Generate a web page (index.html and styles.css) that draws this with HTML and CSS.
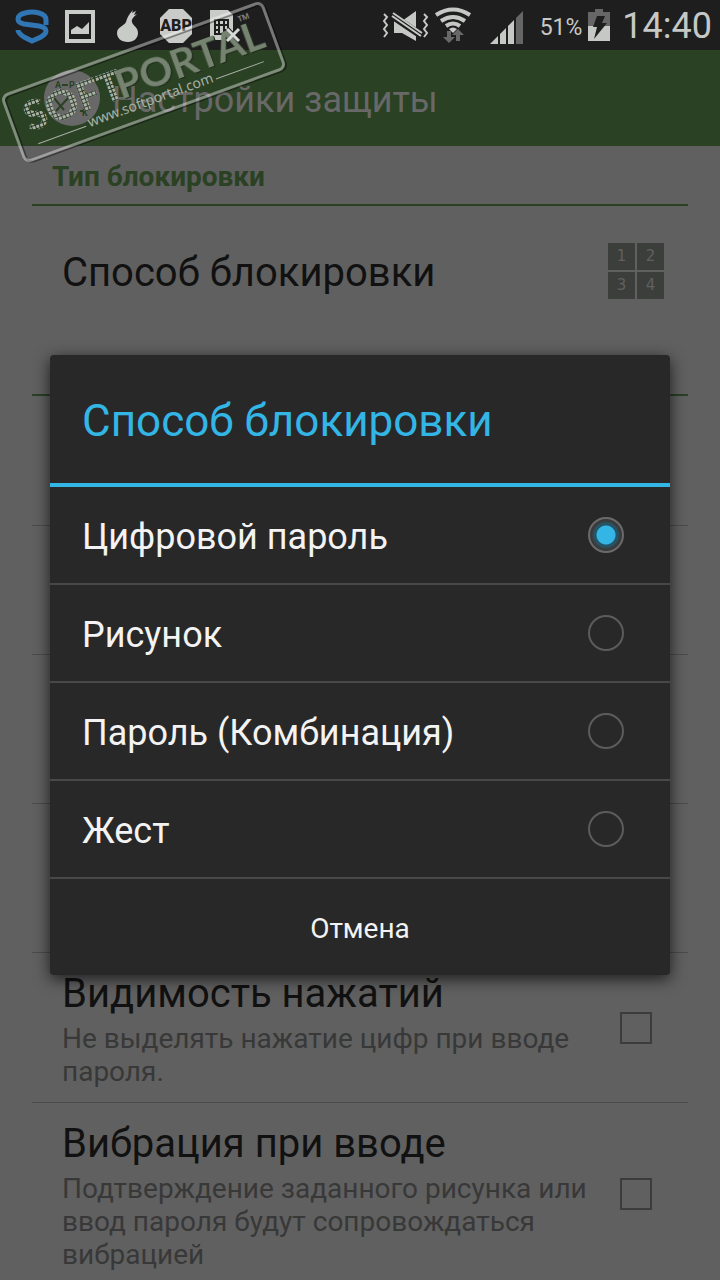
FILE: index.html
```html
<!DOCTYPE html>
<html lang="ru">

<head>
    <meta charset="utf-8">
    <meta name="viewport" content="width=device-width, initial-scale=1">
    <title>Настройки защиты</title>
    <link rel="stylesheet" href="styles.css">
</head>

<body>
    <div class="screen">
        <div class="statusbar">
            <div class="notifications">
                <svg width="48" height="50" viewBox="0 0 48 50">
                    <path d="M38 25v-5c0-4-3-6-7-7q-7-2-14 0c-4 1-7 3-7 6s2 4 6 5l15 2c5 1 7 3 7 5 0 3-2 4-5 6l-9 4-8-4c-3-2-6-4-6-7" fill="none" stroke="#3076b5" stroke-width="5"/>
                </svg>
                <svg width="48" height="50" viewBox="0 0 48 50">
                    <path d="M9 10h30v33H9zM13 14v25h22V14zM15 34v-4l6-4 5 3 7-7v12z" fill="#c9cbc9" fill-rule="evenodd"/>
                </svg>
                <svg width="48" height="50" viewBox="0 0 48 50">
                    <path d="M24 42c-7 0-11-4-11-9 0-6 7-7 9-11 1-4 3-8 7-12l-1 3 4-2-2 4 3-1c-3 3-6 5-5 8 1 4 6 5 6 11 0 5-4 9-10 9z" fill="#c9cbc9"/>
                </svg>
                <svg width="48" height="50" viewBox="0 0 48 50">
                    <path d="M17 9h14l9 9v16l-9 9H17l-9-9V18z" fill="#c9cbc9"/>
                    <text x="24" y="31" class="abp">ABP</text>
                </svg>
                <svg width="48" height="50" viewBox="0 0 48 50">
                    <path d="M10 10h18l5 5v25H10z" fill="#c9cbc9"/>
                    <path d="M14 19h15v16H14z" fill="#1e1e1e"/>
                    <path d="M16 21h2v3h-2zM20 21h3v3h-3zM25 21h2v3h-2zM16 26h2v3h-2zM20 26h3v7h-3zM25 26h2v3h-2zM16 31h2v2h-2z" fill="#c9cbc9"/>
                    <path d="M27 29l12 12M39 29L27 41" stroke="#1e1e1e" stroke-width="5"/>
                </svg>
            </div>
            <div class="system">
                <svg width="48" height="50" viewBox="0 0 48 50">
                    <path d="M2 14l3 3-3 4 3 4-3 4 3 4-3 4M42 14l3 3-3 4 3 4-3 4 3 4-3 4" fill="none" stroke="#c6c8c6" stroke-width="2"/>
                    <path d="M12 21h8l14-10v30L20 33h-8z" fill="#c6c8c6"/>
                    <path d="M9 15l31 21" stroke="#1e1e1e" stroke-width="7"/>
                    <path d="M11 13l29 20M10 16l29 20" stroke="#c6c8c6" stroke-width="2"/>
                </svg>
                <svg class="wifi" width="38" height="50" viewBox="0 0 38 50">
                    <g fill="none" stroke="#c6c8c6" stroke-width="4">
                        <path d="M2 15q17-11 34 0M7 21q12-8 24 0M12 26q7-5 14 0"/>
                    </g>
                    <path d="M15 29q4-3 8 0l-4 4z" fill="#c6c8c6"/>
                    <path d="M13 31h4v6h4l-6 6-6-6h4zM22 41v-6h-4l6-6 6 6h-4v6z" fill="#686868"/>
                </svg>
                <svg class="signal" width="34" height="50" viewBox="0 0 34 50">
                    <path d="M0 44l8-8v8zM10 34l6-6v16h-6zM18 26l6-6v24h-6z" fill="#c6c8c6"/>
                    <path d="M26 18l7-7v33h-7z" fill="#666"/>
                </svg>
                <span class="percent">51%</span>
                <svg class="battery" width="22" height="50" viewBox="0 0 22 50">
                    <path d="M0 12h7V9h8v3h7v15H0z" fill="#666"/>
                    <path d="M0 26h22v15H0z" fill="#c6c8c6"/>
                    <path d="M9 16h8l-3 7h5L6 39l3-12H5z" fill="#1e1e1e"/>
                </svg>
                <span class="clock">14:40</span>
            </div>
        </div>

        <header class="header">
            <svg width="56" height="56" viewBox="0 0 56 56">
                <circle cx="28" cy="28" r="28" fill="#686868"/>
                <path d="M18 15h6M36 18l8 8M26 26l-14 15M10 28l10 12M36 41l4 0" fill="none" stroke="#2a4123" stroke-width="2"/>
                <text x="11" y="18" class="logo-letter">A</text>
                <text x="25" y="18" class="logo-letter">P</text>
                <text x="38" y="46" class="logo-letter">K</text>
            </svg>
            <h1>Настройки защиты</h1>
        </header>

        <main>
            <h2 class="section">Тип блокировки</h2>
            <div class="row last">
                <div class="text">
                    <div class="name">Способ блокировки</div>
                </div>
                <div class="keys"><span>1</span><span>2</span><span>3</span><span>4</span></div>
            </div>
            <!-- rows covered by the dialog -->
            <div class="section"></div>
            <div class="row first"></div>
            <div class="row"></div>
            <div class="row tall"></div>
            <div class="row tall"></div>
            <label class="row tall">
                <span class="text">
                    <span class="name">Видимость нажатий</span>
                    <span class="note">Не выделять нажатие цифр при вводе пароля.</span>
                </span>
                <input type="checkbox">
            </label>
            <label class="row tall">
                <span class="text">
                    <span class="name">Вибрация при вводе</span>
                    <span class="note">Подтверждение заданного рисунка или ввод пароля будут сопровождаться вибрацией</span>
                </span>
                <input type="checkbox">
            </label>
        </main>

        <div class="overlay">
            <form class="dialog" role="dialog" aria-labelledby="dialog-title">
                <h2 id="dialog-title">Способ блокировки</h2>
                <label class="option"><span>Цифровой пароль</span><input type="radio" name="lock" checked></label>
                <label class="option"><span>Рисунок</span><input type="radio" name="lock"></label>
                <label class="option"><span>Пароль (Комбинация)</span><input type="radio" name="lock"></label>
                <label class="option"><span>Жест</span><input type="radio" name="lock"></label>
                <button type="button">Отмена</button>
            </form>
        </div>

        <svg class="stamp" width="290" height="166" viewBox="0 0 290 166">
            <defs>
                <pattern id="dots" width="4" height="4" patternUnits="userSpaceOnUse">
                    <rect width="4" height="4" fill="#1c2a18" fill-opacity=".6"/>
                    <rect width="3" height="3" fill="#a9b3a5"/>
                </pattern>
            </defs>
            <g transform="translate(143.5 82) rotate(-20)">
                <rect x="-136" y="-33" width="276" height="70" rx="6" fill="none" stroke="#000" stroke-opacity=".4" stroke-width="2"/>
                <rect x="-138" y="-35" width="276" height="70" rx="6" fill="none" stroke="#fff" stroke-opacity=".4" stroke-width="3"/>
                <text x="-124" y="8" class="soft">SOFT</text>
                <text x="-27" y="9" class="portal">PORTAL</text>
                <text x="110" y="-18" class="tm">™</text>
                <text x="-66" y="24" class="url">www.softportal.com</text>
                <path d="M-120 22h51M69 22h51" stroke="#a8aea6" stroke-width="1"/>
            </g>
            <path d="M227 29l12 12M239 29l-12 12" stroke="#d8d8d8" stroke-width="3"/>
        </svg>
    </div>
</body>

</html>
```

FILE: styles.css
```css
* {
    box-sizing: border-box;
}

body {
    margin: 0;
    background-color: #606060;
    font-family: Roboto, "Noto Sans", sans-serif;
    color: #111;
}

h1, h2 {
    margin: 0;
    font-weight: normal;
}

.screen {
    position: relative;
    height: 100vh;
    overflow: hidden;
}

/* status bar */
.statusbar {
    display: flex;
    justify-content: space-between;
    height: 50px;
    padding: 0 8px;
    background-color: #1e1e1e;
    color: #c6c8c6;
}

.notifications, .system {
    display: flex;
    align-items: center;
}

.abp {
    font: 900 16px Roboto, sans-serif;
    text-anchor: middle;
    fill: #1e1e1e;
}

.wifi {
    margin-left: 4px;
}

.signal {
    margin-left: 18px;
}

.percent {
    margin: 4px 6px 0 16px;
    font-size: 23px;
}

.clock {
    margin: 2px 0 0 12px;
    font-size: 36px;
}

/* title */
.header {
    display: flex;
    align-items: center;
    gap: 12px;
    height: 96px;
    padding: 0 44px;
    background-color: #2a4123;
    color: #686868;
}

.header h1 {
    padding-top: 4px;
    font-size: 36px;
}

.logo-letter {
    font: bold 9px Roboto, sans-serif;
    fill: #2a4123;
}

/* settings list */
main {
    padding: 0 32px;
}

.section {
    height: 60px;
    padding: 2px 20px 0;
    border-bottom: 2px solid #2a4123;
    color: #2a4123;
    font-size: 28px;
    font-weight: bold;
    line-height: 58px;
}

.row {
    display: flex;
    align-items: center;
    justify-content: space-between;
    min-height: 129px;
    padding: 14px 24px 14px 30px;
    border-bottom: 1px solid #4b4b4b;
}

.row.first {
    min-height: 130px;
}

.row.tall {
    min-height: 149px;
}

.row.last {
    min-height: 130px;
    border-bottom: 0;
}

.text {
    flex: 1;
}

.name {
    display: block;
    padding-top: 4px;
    font-size: 40px;
    line-height: 46px;
}

.note {
    display: block;
    margin-top: 5px;
    color: #383838;
    font-size: 28px;
    line-height: 33px;
}

.row input {
    appearance: none;
    flex: none;
    width: 32px;
    height: 32px;
    margin: 0 12px 0 20px;
    border: 2px solid #3c3c3c;
}

.keys {
    display: grid;
    grid-template-columns: 27px 27px;
    gap: 2px;
}

.keys span {
    height: 27px;
    background-color: #3c3e3c;
    color: #606060;
    font: 15px/27px "DejaVu Sans", sans-serif;
    text-align: center;
}

/* dialog */
.overlay {
    position: absolute;
    inset: 50px 0 0;
    display: flex;
    align-items: center;
    padding: 0 50px;
}

.dialog {
    flex: 1;
    border-radius: 4px;
    background-color: #282828;
    box-shadow: 0 4px 16px rgba(0, 0, 0, 0.7);
    color: #f3f3f3;
}

.dialog h2 {
    padding: 4px 32px 0;
    border-bottom: 4px solid #33b5e5;
    color: #33b5e5;
    font-size: 44px;
    line-height: 124px;
}

.option {
    display: flex;
    align-items: center;
    justify-content: space-between;
    padding: 0 46px 0 32px;
    border-bottom: 2px solid #484848;
    font-size: 36px;
    line-height: 92px;
}

.option span {
    padding-top: 4px;
}

.option input {
    appearance: none;
    width: 36px;
    height: 36px;
    margin: 0;
    border: 2px solid #5c5c5c;
    border-radius: 50%;
}

.option input:checked {
    border-color: #6a6a6a;
    background: radial-gradient(circle, #33b5e5 9px, #265466 10px, #265466 12px, #3a3a3a 14px);
}

.dialog button {
    display: block;
    width: 100%;
    height: 96px;
    padding: 2px 0 0;
    border: 0;
    background: none;
    color: #f3f3f3;
    font: 28px Roboto, sans-serif;
}

/* stamp over the top left corner */
.stamp {
    position: absolute;
    top: 0;
    left: 0;
    pointer-events: none;
}

.soft {
    font: 900 41px Lato, sans-serif;
    fill: url(#dots);
}

.portal {
    font: bold 41px Lato, sans-serif;
    fill: #758370;
    filter: drop-shadow(1px 1px 0 #1c2a18);
}

.tm {
    font: 16px "Noto Sans", sans-serif;
    fill: #858585;
}

.url {
    font: 14px "Noto Sans", sans-serif;
    fill: #a8b0a5;
}
```
